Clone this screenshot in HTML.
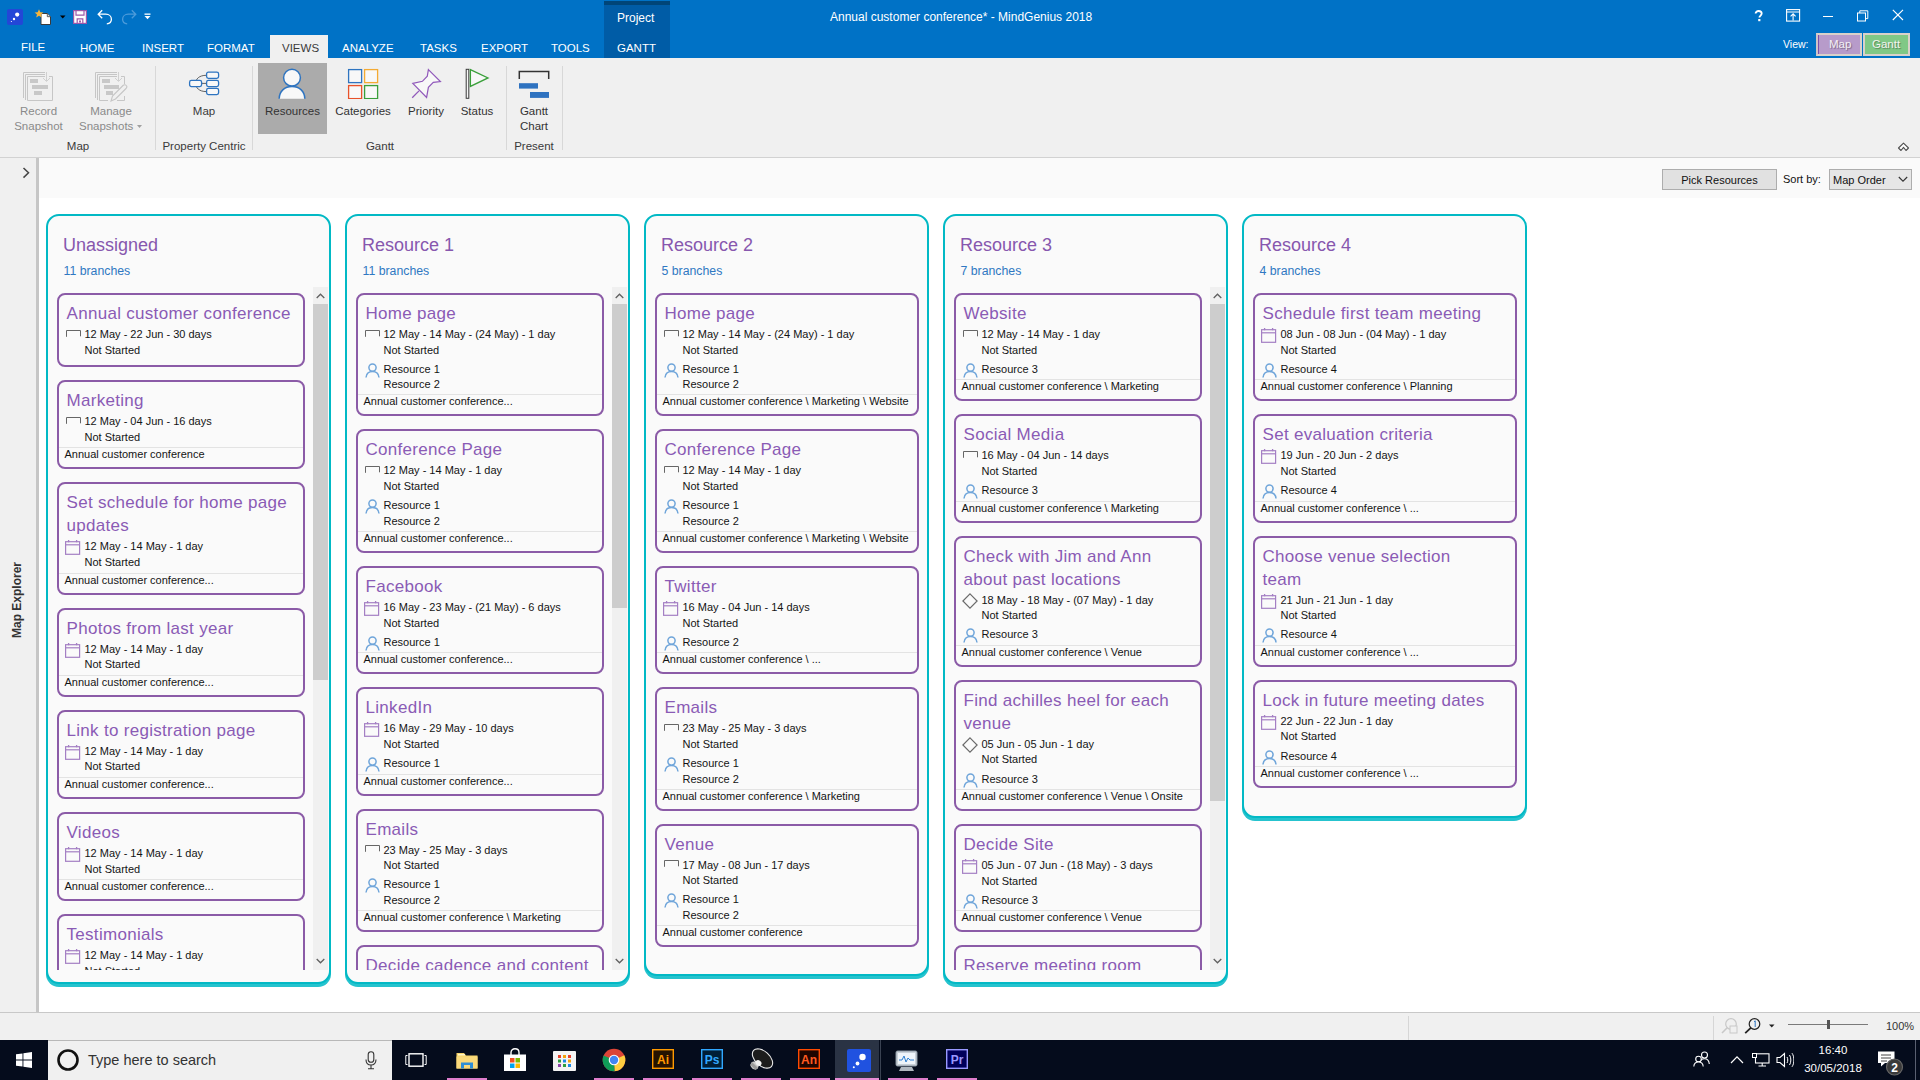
<!DOCTYPE html>
<html><head><meta charset="utf-8">
<style>
*{margin:0;padding:0;box-sizing:border-box}
html,body{width:1920px;height:1080px;overflow:hidden;background:#fff;font-family:"Liberation Sans",sans-serif;color:#000}
.a{position:absolute}
svg{display:block}
#top{position:absolute;left:0;top:0;width:1920px;height:58px;background:#0072C6}
.tab{position:absolute;top:41px;font-size:11.5px;color:#fff;line-height:14px;white-space:nowrap}
#ribbon{position:absolute;left:0;top:58px;width:1920px;height:100px;background:#F0F0F0;border-bottom:1px solid #D2D2D2}
.rb{position:absolute;font-size:11.5px;line-height:15px;color:#3A3A3A;text-align:center;white-space:nowrap}
.rsep{position:absolute;top:8px;width:1px;height:84px;background:#D8D8D8}
#side{position:absolute;left:0;top:158px;width:36px;height:854px;background:#F0F0F0}
#sideline{position:absolute;left:36px;top:158px;width:3px;height:854px;background:#C6C6C6}
#content{position:absolute;left:39px;top:158px;width:1881px;height:854px;background:#fff}
#toolbar{position:absolute;left:39px;top:158px;width:1881px;height:40px;background:#FAFAFA}
#status{position:absolute;left:0;top:1012px;width:1920px;height:28px;background:#F0F0F0;border-top:1px solid #C8C8C8}
#taskbar{position:absolute;left:0;top:1040px;width:1920px;height:40px;background:#050C1C}
.col{position:absolute;top:214px;width:285px;border:2px solid #02B9C5;border-radius:13px;background:#FAFAFA;box-shadow:0 3px 0 0 #26C3CE}
.colh{position:absolute;left:15px;top:18.5px;font-size:18px;line-height:20px;color:#8757AE;white-space:nowrap}
.colb{position:absolute;left:15.5px;top:47.5px;font-size:12.3px;line-height:14px;color:#2F78C2;white-space:nowrap}
.scroll{position:absolute;left:0;top:71px;width:281px;overflow:hidden}
.cards{position:absolute;left:8.5px;top:6px}
.card{position:relative;border:2px solid #8B5BA7;border-radius:8px;background:#FAFAFA;padding-top:6px;padding-bottom:6px;margin-bottom:13px}
.card.nf{padding-bottom:7px}
.ct{position:relative;top:1px;font-size:17px;letter-spacing:0.3px;line-height:23px;color:#8A5BB5;padding-left:8px;white-space:nowrap}
.row{position:relative;font-size:11px;line-height:15.6px;padding-left:26px;color:#141414;white-space:nowrap}
.row .ic{position:absolute}
.dt{margin-top:3px}
.res{margin-top:3.5px}
.r2{line-height:15.2px}
.foot{border-top:1px solid #E3E3E3;margin-top:2px;font-size:11px;line-height:13px;padding-left:6px;color:#141414;white-space:nowrap}
.sb{position:absolute;left:265px;width:15px;background:#F0F0F0}
.thumb{position:absolute;left:0;width:15px;background:#CDCDCD}
.tb{position:absolute;font-size:13px;color:#fff;white-space:nowrap}
</style></head><body>
<div id="top">
<svg class="a" style="left:7px;top:9px" width="16" height="16"><rect x="0" y="0" width="16" height="16" rx="2" fill="#2347D7"/><circle cx="10.2" cy="5.6" r="2.1" fill="#fff"/><circle cx="7" cy="10" r="1.2" fill="#fff"/><circle cx="4.4" cy="12.5" r="0.6" fill="#fff"/></svg>
<svg class="a" style="left:34px;top:9px" width="18" height="17"><path d="M7 4.5H13.3L16.5 7.7V15.5H7Z" fill="#fff" stroke="#3a3a3a" stroke-width="1"/><path d="M13.3 4.5V7.7H16.5" fill="#ddd" stroke="#3a3a3a" stroke-width="0.8"/><path d="M5 0.3L6.3 3.2L9.4 3.4L7 5.4L7.8 8.4L5 6.7L2.2 8.4L3 5.4L0.6 3.4L3.7 3.2Z" fill="#F5B43B"/></svg>
<svg class="a" style="left:60px;top:15px" width="6" height="4"><path d="M0 0.5H5.5L2.75 3.5Z" fill="#000"/></svg>
<svg class="a" style="left:73px;top:10px" width="14" height="14"><rect x="0.6" y="0.6" width="12.8" height="12.8" fill="#fff" stroke="#9D58A9" stroke-width="1.2"/><path d="M3 0.6V5.2H11V0.6" fill="none" stroke="#9D58A9" stroke-width="1.2"/><path d="M4.2 13.4V8.8H9.8V13.4" fill="none" stroke="#9D58A9" stroke-width="1.2"/><rect x="6" y="10.5" width="2" height="2" fill="#9D58A9"/></svg>
<svg class="a" style="left:97px;top:9px" width="16" height="16"><path d="M5.2 1.2L1.2 5.2L5.2 9.2M1.2 5.2H8.8C12 5.2 14.4 7.4 14.4 10.3C14.4 12.8 12.4 14.6 9.8 14.8" fill="none" stroke="#fff" stroke-width="1.3"/></svg>
<svg class="a" style="left:121px;top:9px" width="16" height="16"><path d="M10.8 1.2L14.8 5.2L10.8 9.2M14.8 5.2H7.2C4 5.2 1.6 7.4 1.6 10.3C1.6 12.8 3.6 14.6 6.2 14.8" fill="none" stroke="#4C9BDA" stroke-width="1.3"/></svg>
<svg class="a" style="left:144px;top:13px" width="7" height="7"><rect x="0.5" y="0.5" width="6" height="1.3" fill="#fff"/><path d="M0.5 3H6.5L3.5 6.3Z" fill="#fff"/></svg>
<div class="tb" style="left:830px;top:9.5px;font-size:12px;line-height:14px">Annual customer conference* - MindGenius 2018</div>
<div class="a" style="left:604px;top:1px;width:66px;height:57px;background:#005CA6"></div>
<div class="a" style="left:604px;top:1px;width:66px;height:4px;background:#004578"></div>
<div class="tb" style="left:617px;top:11px;font-size:12px;line-height:14px">Project</div>
<svg class="a" style="left:1754px;top:10px" width="10" height="12"><path d="M1.6 3.6C1.6 1.9 2.9 1 4.6 1C6.4 1 7.7 2 7.7 3.6C7.7 5.4 5.4 5.7 5.4 7.6" fill="none" stroke="#fff" stroke-width="1.8"/><rect x="4.2" y="9" width="2.2" height="2.2" fill="#fff"/></svg>
<svg class="a" style="left:1786px;top:9px" width="15" height="13"><rect x="0.6" y="0.6" width="13" height="11.5" fill="none" stroke="#fff" stroke-width="1.1"/><path d="M0.6 3H13.6" stroke="#fff" stroke-width="1"/><path d="M7.1 11.5V5M4.6 7.4L7.1 4.9L9.6 7.4" fill="none" stroke="#fff" stroke-width="1.1"/></svg>
<div class="a" style="left:1823px;top:16px;width:10px;height:1px;background:#fff"></div>
<svg class="a" style="left:1857px;top:10px" width="12" height="12"><rect x="0.5" y="3" width="8" height="8" fill="none" stroke="#fff" stroke-width="1"/><path d="M2.8 3V0.8H10.8V8.6H8.5" fill="none" stroke="#fff" stroke-width="1"/></svg>
<svg class="a" style="left:1892px;top:9px" width="12" height="12"><path d="M0.8 0.8L11 11M11 0.8L0.8 11" stroke="#fff" stroke-width="1.1"/></svg>
<div class="tab" style="left:21px;top:39.5px">FILE</div>
<div class="tab" style="left:80px">HOME</div>
<div class="tab" style="left:142px">INSERT</div>
<div class="tab" style="left:207px">FORMAT</div>
<div class="a" style="left:270px;top:35px;width:58px;height:23px;background:#F0F0F0"></div>
<div class="tab" style="left:282px;color:#3A3A3A">VIEWS</div>
<div class="tab" style="left:342px">ANALYZE</div>
<div class="tab" style="left:420px">TASKS</div>
<div class="tab" style="left:481px">EXPORT</div>
<div class="tab" style="left:551px">TOOLS</div>
<div class="tab" style="left:617px">GANTT</div>
<div class="tb" style="left:1783px;top:38px;font-size:10.5px;line-height:12px">View:</div>
<div class="a" style="left:1816px;top:33px;width:46px;height:23px;background:#B79BCA;border:2px solid #D9D1CA;border-left:2px solid #CFC3C8"></div>
<div class="a" style="left:1818px;top:35px;width:1px;height:19px;background:#7E4EA8"></div>
<div class="tb" style="left:1829px;top:38px;font-size:11.5px;line-height:13px;color:#F4F0F4;text-shadow:1px 1px 1px rgba(0,0,0,0.35)">Map</div>
<div class="a" style="left:1863px;top:33px;width:47px;height:23px;background:#80C886;border:2px solid #D9D1CA"></div>
<div class="tb" style="left:1872px;top:38px;font-size:11.5px;line-height:13px;color:#F4F4F0;text-shadow:1px 1px 1px rgba(0,0,0,0.35)">Gantt</div>
</div>
<div id="ribbon">
<svg class="a" style="left:23px;top:14px" width="32" height="29"><g fill="none" stroke="#C6C6C6" stroke-width="1"><path d="M0.5 26V0.5H22"/><path d="M2.5 28V2.5H22"/><path d="M4.5 28.5V4.5H22M26 4.5H29.5V28.5H4.5"/></g><g fill="#C8C8C8"><rect x="7" y="7" width="8" height="4"/><rect x="9" y="13" width="16" height="4"/><rect x="11" y="19" width="8" height="4"/></g><path d="M23.5 0V9M20 6L23.5 9.5L27 6" fill="none" stroke="#D0D0D0" stroke-width="1"/></svg>
<svg class="a" style="left:95px;top:14px" width="33" height="30"><g fill="none" stroke="#C6C6C6" stroke-width="1"><path d="M0.5 26V0.5H22"/><path d="M2.5 28V2.5H22"/><path d="M4.5 28.5V4.5H22M26 4.5H29.5V12M29.5 24V28.5H22M13 28.5H4.5"/></g><g fill="#C8C8C8"><rect x="7" y="7" width="8" height="4"/><rect x="9" y="13" width="15" height="4"/><rect x="11" y="19" width="7" height="4"/></g><path d="M23.5 0V9M20 6L23.5 9.5L27 6" fill="none" stroke="#D0D0D0" stroke-width="1"/><path d="M16 29L17.5 24L28 13.5C29 12.5 30.5 12.5 31.3 13.5C32 14.3 32 15.5 31 16.5L20.5 27Z" fill="#F0F0F0" stroke="#C6C6C6" stroke-width="1.1"/></svg>
<div class="rb" style="left:14px;top:46px;width:49px;color:#8A8A8A">Record<br>Snapshot</div>
<div class="rb" style="left:81px;top:46px;width:60px;color:#8A8A8A">Manage</div><div class="rb" style="left:79px;top:61px;width:54px;color:#8A8A8A">Snapshots</div>
<svg class="a" style="left:137px;top:67px" width="5" height="4"><path d="M0 0H5L2.5 3Z" fill="#A0A0A0"/></svg>
<div class="rb" style="left:40px;top:81px;width:76px;color:#3A3A3A">Map</div>
<div class="rsep" style="left:155px"></div>
<svg class="a" style="left:188px;top:13px" width="32" height="25"><path d="M18.5 4.3C11 4.3 7.7 8 7.7 12.4C7.7 16.8 11 20.6 18.5 20.6M13.7 12.4H18.5" fill="none" stroke="#505050" stroke-width="0.9"/><g fill="#F8F8F8" stroke="#2E74C0" stroke-width="1.3"><rect x="1.6" y="9.4" width="12" height="6.2" rx="1.8"/><rect x="18.6" y="1.2" width="12" height="6.2" rx="1.8"/><rect x="18.6" y="9.4" width="12" height="6.2" rx="1.8"/><rect x="18.6" y="17.4" width="12" height="6.2" rx="1.8"/></g></svg>
<div class="rb" style="left:174px;top:46px;width:60px;color:#3A3A3A">Map</div>
<div class="rb" style="left:150px;top:81px;width:108px;color:#3A3A3A">Property Centric</div>
<div class="rsep" style="left:252px"></div>
<div class="a" style="left:258px;top:5px;width:69px;height:71px;background:#ABABAB"></div>
<svg class="a" style="left:278px;top:10px" width="28" height="31"><circle cx="14" cy="9.7" r="8.4" fill="#F8F8F8" stroke="#2E74C0" stroke-width="1.5"/><path d="M1.2 30.8C1.2 23.2 6.5 18.6 14 18.6S26.8 23.2 26.8 30.8Z" fill="#F8F8F8"/><path d="M1.2 30.8C1.2 23.2 6.5 18.6 14 18.6S26.8 23.2 26.8 30.8" fill="none" stroke="#2E74C0" stroke-width="1.5"/></svg>
<div class="rb" style="left:258px;top:46px;width:69px;color:#333">Resources</div>
<svg class="a" style="left:347px;top:10px" width="32" height="31"><rect x="1.6" y="1.6" width="13" height="13" fill="#F8F8F8" stroke="#2E74C0" stroke-width="1.3"/><rect x="17.6" y="1.6" width="13" height="13" fill="#F8F8F8" stroke="#F4AA33" stroke-width="1.3"/><rect x="1.6" y="17.6" width="13" height="13" fill="#F8F8F8" stroke="#E8522A" stroke-width="1.3"/><rect x="17.6" y="17.6" width="13" height="13" fill="#F8F8F8" stroke="#3A9F3A" stroke-width="1.3"/></svg>
<div class="rb" style="left:333px;top:46px;width:60px;color:#333">Categories</div>
<svg class="a" style="left:411px;top:10px" width="31" height="31"><path d="M17.4 1.6L29.4 13.5L22.3 14.3L17.4 19.3L15.6 29.4L1.8 15.4L11.4 13.3L16.3 8.1Z" fill="#F8F8F8" stroke="#9058BA" stroke-width="1.2" stroke-linejoin="miter"/><path d="M8 22.9L1.2 29.7" stroke="#9058BA" stroke-width="1.3"/></svg>
<div class="rb" style="left:400px;top:46px;width:52px;color:#333">Priority</div>
<svg class="a" style="left:465px;top:10px" width="25" height="31"><rect x="1.2" y="1.3" width="2.6" height="29" fill="#F8F8F8" stroke="#3A3A3A" stroke-width="1"/><path d="M5.4 1.6L23 9.9L5.4 18.4Z" fill="#F8F8F8" stroke="#3A9F3A" stroke-width="1.3"/></svg>
<div class="rb" style="left:452px;top:46px;width:50px;color:#333">Status</div>
<div class="rb" style="left:300px;top:81px;width:160px;color:#3A3A3A">Gantt</div>
<div class="rsep" style="left:506px"></div>
<svg class="a" style="left:518px;top:12px" width="32" height="28"><path d="M1.3 9V1.4H30.7V9" fill="none" stroke="#333" stroke-width="1.5"/><rect x="1" y="13.2" width="19" height="5.4" fill="#2E72C0"/><rect x="12" y="22" width="19" height="5.9" fill="#2E72C0"/></svg>
<div class="rb" style="left:509px;top:46px;width:50px;color:#333">Gantt<br>Chart</div>
<div class="rb" style="left:509px;top:81px;width:50px;color:#3A3A3A">Present</div>
<div class="rsep" style="left:562px"></div>
<svg class="a" style="left:1897px;top:84px" width="13" height="10"><path d="M1.5 6L6.5 1.2L11.5 6L9 8.5L6.5 5.3L4 8.5Z" fill="#fff" stroke="#505050" stroke-width="1.1" stroke-linejoin="round"/></svg>
</div>
<div id="side">
<svg class="a" style="left:22px;top:9px" width="8" height="12"><path d="M1.5 1L6.5 5.8L1.5 10.6" fill="none" stroke="#444" stroke-width="1.5"/></svg>
<div class="a" style="left:-21px;top:435px;width:76px;height:14px;transform:rotate(-90deg);font-size:12px;line-height:14px;font-weight:bold;color:#333;white-space:nowrap;text-align:center">Map Explorer</div>
</div>
<div id="sideline"></div>
<div id="content"></div>
<div id="toolbar">
<div class="a" style="left:1623px;top:11px;width:115px;height:21px;background:#E1E1E1;border:1px solid #ADADAD;font-size:11px;line-height:21px;text-align:center;color:#111">Pick Resources</div>
<div class="a" style="left:1744px;top:14px;font-size:11px;line-height:14px;color:#111;white-space:nowrap">Sort by:</div>
<div class="a" style="left:1790px;top:11px;width:83px;height:21px;background:#E6E6E6;border:1px solid #ADADAD;font-size:11px;line-height:21px;color:#111;padding-left:3px;white-space:nowrap">Map Order</div>
<svg class="a" style="left:1859px;top:18px" width="10" height="7"><path d="M0.8 1L5 5.2L9.2 1" fill="none" stroke="#333" stroke-width="1.1"/></svg>
</div>
<div class="col" style="left:46px;height:770px"><div class="colh">Unassigned</div><div class="colb">11 branches</div><div class="scroll" style="height:683px"><div class="cards" style="width:248px"><div class="card nf"><div class="ct">Annual customer conference</div><div class="row dt"><svg class="ic" style="left:7px;top:2.7px" width="15" height="8"><path d="M0.5 6.8V0.5H14.5V6.3" fill="none" stroke="#666" stroke-width="1"/></svg>12 May - 22 Jun - 30 days</div><div class="row">Not Started</div></div><div class="card"><div class="ct">Marketing</div><div class="row dt"><svg class="ic" style="left:7px;top:2.7px" width="15" height="8"><path d="M0.5 6.8V0.5H14.5V6.3" fill="none" stroke="#666" stroke-width="1"/></svg>12 May - 04 Jun - 16 days</div><div class="row">Not Started</div><div class="foot">Annual customer conference</div></div><div class="card"><div class="ct">Set schedule for home page<br>updates</div><div class="row dt"><svg class="ic" style="left:6px;top:0px" width="16" height="17"><rect x="0.6" y="2.7" width="14" height="12.6" fill="none" stroke="#A47FC4" stroke-width="1.2"/><path d="M0.6 5.8H14.6" stroke="#A47FC4" stroke-width="1.2"/><path d="M3.6 0.9V3.2M11.6 0.9V3.2" stroke="#A47FC4" stroke-width="1.3"/></svg>12 May - 14 May - 1 day</div><div class="row">Not Started</div><div class="foot">Annual customer conference...</div></div><div class="card"><div class="ct">Photos from last year</div><div class="row dt"><svg class="ic" style="left:6px;top:0px" width="16" height="17"><rect x="0.6" y="2.7" width="14" height="12.6" fill="none" stroke="#A47FC4" stroke-width="1.2"/><path d="M0.6 5.8H14.6" stroke="#A47FC4" stroke-width="1.2"/><path d="M3.6 0.9V3.2M11.6 0.9V3.2" stroke="#A47FC4" stroke-width="1.3"/></svg>12 May - 14 May - 1 day</div><div class="row">Not Started</div><div class="foot">Annual customer conference...</div></div><div class="card"><div class="ct">Link to registration page</div><div class="row dt"><svg class="ic" style="left:6px;top:0px" width="16" height="17"><rect x="0.6" y="2.7" width="14" height="12.6" fill="none" stroke="#A47FC4" stroke-width="1.2"/><path d="M0.6 5.8H14.6" stroke="#A47FC4" stroke-width="1.2"/><path d="M3.6 0.9V3.2M11.6 0.9V3.2" stroke="#A47FC4" stroke-width="1.3"/></svg>12 May - 14 May - 1 day</div><div class="row">Not Started</div><div class="foot">Annual customer conference...</div></div><div class="card"><div class="ct">Videos</div><div class="row dt"><svg class="ic" style="left:6px;top:0px" width="16" height="17"><rect x="0.6" y="2.7" width="14" height="12.6" fill="none" stroke="#A47FC4" stroke-width="1.2"/><path d="M0.6 5.8H14.6" stroke="#A47FC4" stroke-width="1.2"/><path d="M3.6 0.9V3.2M11.6 0.9V3.2" stroke="#A47FC4" stroke-width="1.3"/></svg>12 May - 14 May - 1 day</div><div class="row">Not Started</div><div class="foot">Annual customer conference...</div></div><div class="card"><div class="ct">Testimonials</div><div class="row dt"><svg class="ic" style="left:6px;top:0px" width="16" height="17"><rect x="0.6" y="2.7" width="14" height="12.6" fill="none" stroke="#A47FC4" stroke-width="1.2"/><path d="M0.6 5.8H14.6" stroke="#A47FC4" stroke-width="1.2"/><path d="M3.6 0.9V3.2M11.6 0.9V3.2" stroke="#A47FC4" stroke-width="1.3"/></svg>12 May - 14 May - 1 day</div><div class="row">Not Started</div><div class="foot">Annual customer conference...</div></div></div></div><div class="sb" style="top:71px;height:683px"><svg style="position:absolute;left:3px;top:6px" width="9" height="6"><path d="M0.7 5L4.5 1.2L8.3 5" fill="none" stroke="#606060" stroke-width="1.3"/></svg><div class="thumb" style="top:17px;height:376px"></div><svg style="position:absolute;left:3px;top:671px" width="9" height="6"><path d="M0.7 1L4.5 4.8L8.3 1" fill="none" stroke="#606060" stroke-width="1.3"/></svg></div></div><div class="col" style="left:345px;height:770px"><div class="colh">Resource 1</div><div class="colb">11 branches</div><div class="scroll" style="height:683px"><div class="cards" style="width:248px"><div class="card"><div class="ct">Home page</div><div class="row dt"><svg class="ic" style="left:7px;top:2.7px" width="15" height="8"><path d="M0.5 6.8V0.5H14.5V6.3" fill="none" stroke="#666" stroke-width="1"/></svg>12 May - 14 May - (24 May) - 1 day</div><div class="row">Not Started</div><div class="row res"><svg class="ic" style="left:7px;top:1px" width="15" height="15"><circle cx="7.5" cy="4.6" r="3.6" fill="none" stroke="#6FA5DA" stroke-width="1.5"/><path d="M1 14.5C1.4 10.6 4 8.6 7.5 8.6S13.6 10.6 14 14.5" fill="none" stroke="#6FA5DA" stroke-width="1.5"/></svg>Resource 1</div><div class="row r2">Resource 2</div><div class="foot">Annual customer conference...</div></div><div class="card"><div class="ct">Conference Page</div><div class="row dt"><svg class="ic" style="left:7px;top:2.7px" width="15" height="8"><path d="M0.5 6.8V0.5H14.5V6.3" fill="none" stroke="#666" stroke-width="1"/></svg>12 May - 14 May - 1 day</div><div class="row">Not Started</div><div class="row res"><svg class="ic" style="left:7px;top:1px" width="15" height="15"><circle cx="7.5" cy="4.6" r="3.6" fill="none" stroke="#6FA5DA" stroke-width="1.5"/><path d="M1 14.5C1.4 10.6 4 8.6 7.5 8.6S13.6 10.6 14 14.5" fill="none" stroke="#6FA5DA" stroke-width="1.5"/></svg>Resource 1</div><div class="row r2">Resource 2</div><div class="foot">Annual customer conference...</div></div><div class="card"><div class="ct">Facebook</div><div class="row dt"><svg class="ic" style="left:6px;top:0px" width="16" height="17"><rect x="0.6" y="2.7" width="14" height="12.6" fill="none" stroke="#A47FC4" stroke-width="1.2"/><path d="M0.6 5.8H14.6" stroke="#A47FC4" stroke-width="1.2"/><path d="M3.6 0.9V3.2M11.6 0.9V3.2" stroke="#A47FC4" stroke-width="1.3"/></svg>16 May - 23 May - (21 May) - 6 days</div><div class="row">Not Started</div><div class="row res"><svg class="ic" style="left:7px;top:1px" width="15" height="15"><circle cx="7.5" cy="4.6" r="3.6" fill="none" stroke="#6FA5DA" stroke-width="1.5"/><path d="M1 14.5C1.4 10.6 4 8.6 7.5 8.6S13.6 10.6 14 14.5" fill="none" stroke="#6FA5DA" stroke-width="1.5"/></svg>Resource 1</div><div class="foot">Annual customer conference...</div></div><div class="card"><div class="ct">LinkedIn</div><div class="row dt"><svg class="ic" style="left:6px;top:0px" width="16" height="17"><rect x="0.6" y="2.7" width="14" height="12.6" fill="none" stroke="#A47FC4" stroke-width="1.2"/><path d="M0.6 5.8H14.6" stroke="#A47FC4" stroke-width="1.2"/><path d="M3.6 0.9V3.2M11.6 0.9V3.2" stroke="#A47FC4" stroke-width="1.3"/></svg>16 May - 29 May - 10 days</div><div class="row">Not Started</div><div class="row res"><svg class="ic" style="left:7px;top:1px" width="15" height="15"><circle cx="7.5" cy="4.6" r="3.6" fill="none" stroke="#6FA5DA" stroke-width="1.5"/><path d="M1 14.5C1.4 10.6 4 8.6 7.5 8.6S13.6 10.6 14 14.5" fill="none" stroke="#6FA5DA" stroke-width="1.5"/></svg>Resource 1</div><div class="foot">Annual customer conference...</div></div><div class="card"><div class="ct">Emails</div><div class="row dt"><svg class="ic" style="left:7px;top:2.7px" width="15" height="8"><path d="M0.5 6.8V0.5H14.5V6.3" fill="none" stroke="#666" stroke-width="1"/></svg>23 May - 25 May - 3 days</div><div class="row">Not Started</div><div class="row res"><svg class="ic" style="left:7px;top:1px" width="15" height="15"><circle cx="7.5" cy="4.6" r="3.6" fill="none" stroke="#6FA5DA" stroke-width="1.5"/><path d="M1 14.5C1.4 10.6 4 8.6 7.5 8.6S13.6 10.6 14 14.5" fill="none" stroke="#6FA5DA" stroke-width="1.5"/></svg>Resource 1</div><div class="row r2">Resource 2</div><div class="foot">Annual customer conference \ Marketing</div></div><div class="card"><div class="ct">Decide cadence and content</div><div class="row dt"><svg class="ic" style="left:6px;top:0px" width="16" height="17"><rect x="0.6" y="2.7" width="14" height="12.6" fill="none" stroke="#A47FC4" stroke-width="1.2"/><path d="M0.6 5.8H14.6" stroke="#A47FC4" stroke-width="1.2"/><path d="M3.6 0.9V3.2M11.6 0.9V3.2" stroke="#A47FC4" stroke-width="1.3"/></svg>23 May - 25 May - 3 days</div><div class="row">Not Started</div><div class="row res"><svg class="ic" style="left:7px;top:1px" width="15" height="15"><circle cx="7.5" cy="4.6" r="3.6" fill="none" stroke="#6FA5DA" stroke-width="1.5"/><path d="M1 14.5C1.4 10.6 4 8.6 7.5 8.6S13.6 10.6 14 14.5" fill="none" stroke="#6FA5DA" stroke-width="1.5"/></svg>Resource 1</div><div class="foot">Annual customer conference...</div></div></div></div><div class="sb" style="top:71px;height:683px"><svg style="position:absolute;left:3px;top:6px" width="9" height="6"><path d="M0.7 5L4.5 1.2L8.3 5" fill="none" stroke="#606060" stroke-width="1.3"/></svg><div class="thumb" style="top:17px;height:304px"></div><svg style="position:absolute;left:3px;top:671px" width="9" height="6"><path d="M0.7 1L4.5 4.8L8.3 1" fill="none" stroke="#606060" stroke-width="1.3"/></svg></div></div><div class="col" style="left:644px;height:762px"><div class="colh">Resource 2</div><div class="colb">5 branches</div><div class="scroll" style="bottom:0"><div class="cards" style="width:264px"><div class="card"><div class="ct">Home page</div><div class="row dt"><svg class="ic" style="left:7px;top:2.7px" width="15" height="8"><path d="M0.5 6.8V0.5H14.5V6.3" fill="none" stroke="#666" stroke-width="1"/></svg>12 May - 14 May - (24 May) - 1 day</div><div class="row">Not Started</div><div class="row res"><svg class="ic" style="left:7px;top:1px" width="15" height="15"><circle cx="7.5" cy="4.6" r="3.6" fill="none" stroke="#6FA5DA" stroke-width="1.5"/><path d="M1 14.5C1.4 10.6 4 8.6 7.5 8.6S13.6 10.6 14 14.5" fill="none" stroke="#6FA5DA" stroke-width="1.5"/></svg>Resource 1</div><div class="row r2">Resource 2</div><div class="foot">Annual customer conference \ Marketing \ Website</div></div><div class="card"><div class="ct">Conference Page</div><div class="row dt"><svg class="ic" style="left:7px;top:2.7px" width="15" height="8"><path d="M0.5 6.8V0.5H14.5V6.3" fill="none" stroke="#666" stroke-width="1"/></svg>12 May - 14 May - 1 day</div><div class="row">Not Started</div><div class="row res"><svg class="ic" style="left:7px;top:1px" width="15" height="15"><circle cx="7.5" cy="4.6" r="3.6" fill="none" stroke="#6FA5DA" stroke-width="1.5"/><path d="M1 14.5C1.4 10.6 4 8.6 7.5 8.6S13.6 10.6 14 14.5" fill="none" stroke="#6FA5DA" stroke-width="1.5"/></svg>Resource 1</div><div class="row r2">Resource 2</div><div class="foot">Annual customer conference \ Marketing \ Website</div></div><div class="card"><div class="ct">Twitter</div><div class="row dt"><svg class="ic" style="left:6px;top:0px" width="16" height="17"><rect x="0.6" y="2.7" width="14" height="12.6" fill="none" stroke="#A47FC4" stroke-width="1.2"/><path d="M0.6 5.8H14.6" stroke="#A47FC4" stroke-width="1.2"/><path d="M3.6 0.9V3.2M11.6 0.9V3.2" stroke="#A47FC4" stroke-width="1.3"/></svg>16 May - 04 Jun - 14 days</div><div class="row">Not Started</div><div class="row res"><svg class="ic" style="left:7px;top:1px" width="15" height="15"><circle cx="7.5" cy="4.6" r="3.6" fill="none" stroke="#6FA5DA" stroke-width="1.5"/><path d="M1 14.5C1.4 10.6 4 8.6 7.5 8.6S13.6 10.6 14 14.5" fill="none" stroke="#6FA5DA" stroke-width="1.5"/></svg>Resource 2</div><div class="foot">Annual customer conference \ ...</div></div><div class="card"><div class="ct">Emails</div><div class="row dt"><svg class="ic" style="left:7px;top:2.7px" width="15" height="8"><path d="M0.5 6.8V0.5H14.5V6.3" fill="none" stroke="#666" stroke-width="1"/></svg>23 May - 25 May - 3 days</div><div class="row">Not Started</div><div class="row res"><svg class="ic" style="left:7px;top:1px" width="15" height="15"><circle cx="7.5" cy="4.6" r="3.6" fill="none" stroke="#6FA5DA" stroke-width="1.5"/><path d="M1 14.5C1.4 10.6 4 8.6 7.5 8.6S13.6 10.6 14 14.5" fill="none" stroke="#6FA5DA" stroke-width="1.5"/></svg>Resource 1</div><div class="row r2">Resource 2</div><div class="foot">Annual customer conference \ Marketing</div></div><div class="card"><div class="ct">Venue</div><div class="row dt"><svg class="ic" style="left:7px;top:2.7px" width="15" height="8"><path d="M0.5 6.8V0.5H14.5V6.3" fill="none" stroke="#666" stroke-width="1"/></svg>17 May - 08 Jun - 17 days</div><div class="row">Not Started</div><div class="row res"><svg class="ic" style="left:7px;top:1px" width="15" height="15"><circle cx="7.5" cy="4.6" r="3.6" fill="none" stroke="#6FA5DA" stroke-width="1.5"/><path d="M1 14.5C1.4 10.6 4 8.6 7.5 8.6S13.6 10.6 14 14.5" fill="none" stroke="#6FA5DA" stroke-width="1.5"/></svg>Resource 1</div><div class="row r2">Resource 2</div><div class="foot">Annual customer conference</div></div></div></div></div><div class="col" style="left:943px;height:770px"><div class="colh">Resource 3</div><div class="colb">7 branches</div><div class="scroll" style="height:683px"><div class="cards" style="width:248px"><div class="card"><div class="ct">Website</div><div class="row dt"><svg class="ic" style="left:7px;top:2.7px" width="15" height="8"><path d="M0.5 6.8V0.5H14.5V6.3" fill="none" stroke="#666" stroke-width="1"/></svg>12 May - 14 May - 1 day</div><div class="row">Not Started</div><div class="row res"><svg class="ic" style="left:7px;top:1px" width="15" height="15"><circle cx="7.5" cy="4.6" r="3.6" fill="none" stroke="#6FA5DA" stroke-width="1.5"/><path d="M1 14.5C1.4 10.6 4 8.6 7.5 8.6S13.6 10.6 14 14.5" fill="none" stroke="#6FA5DA" stroke-width="1.5"/></svg>Resource 3</div><div class="foot">Annual customer conference \ Marketing</div></div><div class="card"><div class="ct">Social Media</div><div class="row dt"><svg class="ic" style="left:7px;top:2.7px" width="15" height="8"><path d="M0.5 6.8V0.5H14.5V6.3" fill="none" stroke="#666" stroke-width="1"/></svg>16 May - 04 Jun - 14 days</div><div class="row">Not Started</div><div class="row res"><svg class="ic" style="left:7px;top:1px" width="15" height="15"><circle cx="7.5" cy="4.6" r="3.6" fill="none" stroke="#6FA5DA" stroke-width="1.5"/><path d="M1 14.5C1.4 10.6 4 8.6 7.5 8.6S13.6 10.6 14 14.5" fill="none" stroke="#6FA5DA" stroke-width="1.5"/></svg>Resource 3</div><div class="foot">Annual customer conference \ Marketing</div></div><div class="card"><div class="ct">Check with Jim and Ann<br>about past locations</div><div class="row dt"><svg class="ic" style="left:6px;top:0px" width="16" height="16"><path d="M8 0.9L15.1 8L8 15.1L0.9 8Z" fill="none" stroke="#6a6a6a" stroke-width="1.2"/></svg>18 May - 18 May - (07 May) - 1 day</div><div class="row">Not Started</div><div class="row res"><svg class="ic" style="left:7px;top:1px" width="15" height="15"><circle cx="7.5" cy="4.6" r="3.6" fill="none" stroke="#6FA5DA" stroke-width="1.5"/><path d="M1 14.5C1.4 10.6 4 8.6 7.5 8.6S13.6 10.6 14 14.5" fill="none" stroke="#6FA5DA" stroke-width="1.5"/></svg>Resource 3</div><div class="foot">Annual customer conference \ Venue</div></div><div class="card"><div class="ct">Find achilles heel for each<br>venue</div><div class="row dt"><svg class="ic" style="left:6px;top:0px" width="16" height="16"><path d="M8 0.9L15.1 8L8 15.1L0.9 8Z" fill="none" stroke="#6a6a6a" stroke-width="1.2"/></svg>05 Jun - 05 Jun - 1 day</div><div class="row">Not Started</div><div class="row res"><svg class="ic" style="left:7px;top:1px" width="15" height="15"><circle cx="7.5" cy="4.6" r="3.6" fill="none" stroke="#6FA5DA" stroke-width="1.5"/><path d="M1 14.5C1.4 10.6 4 8.6 7.5 8.6S13.6 10.6 14 14.5" fill="none" stroke="#6FA5DA" stroke-width="1.5"/></svg>Resource 3</div><div class="foot">Annual customer conference \ Venue \ Onsite</div></div><div class="card"><div class="ct">Decide Site</div><div class="row dt"><svg class="ic" style="left:6px;top:0px" width="16" height="17"><rect x="0.6" y="2.7" width="14" height="12.6" fill="none" stroke="#A47FC4" stroke-width="1.2"/><path d="M0.6 5.8H14.6" stroke="#A47FC4" stroke-width="1.2"/><path d="M3.6 0.9V3.2M11.6 0.9V3.2" stroke="#A47FC4" stroke-width="1.3"/></svg>05 Jun - 07 Jun - (18 May) - 3 days</div><div class="row">Not Started</div><div class="row res"><svg class="ic" style="left:7px;top:1px" width="15" height="15"><circle cx="7.5" cy="4.6" r="3.6" fill="none" stroke="#6FA5DA" stroke-width="1.5"/><path d="M1 14.5C1.4 10.6 4 8.6 7.5 8.6S13.6 10.6 14 14.5" fill="none" stroke="#6FA5DA" stroke-width="1.5"/></svg>Resource 3</div><div class="foot">Annual customer conference \ Venue</div></div><div class="card"><div class="ct">Reserve meeting room</div><div class="row dt"><svg class="ic" style="left:6px;top:0px" width="16" height="17"><rect x="0.6" y="2.7" width="14" height="12.6" fill="none" stroke="#A47FC4" stroke-width="1.2"/><path d="M0.6 5.8H14.6" stroke="#A47FC4" stroke-width="1.2"/><path d="M3.6 0.9V3.2M11.6 0.9V3.2" stroke="#A47FC4" stroke-width="1.3"/></svg>05 Jun - 07 Jun - 3 days</div><div class="row">Not Started</div><div class="row res"><svg class="ic" style="left:7px;top:1px" width="15" height="15"><circle cx="7.5" cy="4.6" r="3.6" fill="none" stroke="#6FA5DA" stroke-width="1.5"/><path d="M1 14.5C1.4 10.6 4 8.6 7.5 8.6S13.6 10.6 14 14.5" fill="none" stroke="#6FA5DA" stroke-width="1.5"/></svg>Resource 3</div><div class="foot">Annual customer conference \ Venue</div></div></div></div><div class="sb" style="top:71px;height:683px"><svg style="position:absolute;left:3px;top:6px" width="9" height="6"><path d="M0.7 5L4.5 1.2L8.3 5" fill="none" stroke="#606060" stroke-width="1.3"/></svg><div class="thumb" style="top:17px;height:497px"></div><svg style="position:absolute;left:3px;top:671px" width="9" height="6"><path d="M0.7 1L4.5 4.8L8.3 1" fill="none" stroke="#606060" stroke-width="1.3"/></svg></div></div><div class="col" style="left:1242px;height:604px"><div class="colh">Resource 4</div><div class="colb">4 branches</div><div class="scroll" style="bottom:0"><div class="cards" style="width:264px"><div class="card"><div class="ct">Schedule first team meeting</div><div class="row dt"><svg class="ic" style="left:6px;top:0px" width="16" height="17"><rect x="0.6" y="2.7" width="14" height="12.6" fill="none" stroke="#A47FC4" stroke-width="1.2"/><path d="M0.6 5.8H14.6" stroke="#A47FC4" stroke-width="1.2"/><path d="M3.6 0.9V3.2M11.6 0.9V3.2" stroke="#A47FC4" stroke-width="1.3"/></svg>08 Jun - 08 Jun - (04 May) - 1 day</div><div class="row">Not Started</div><div class="row res"><svg class="ic" style="left:7px;top:1px" width="15" height="15"><circle cx="7.5" cy="4.6" r="3.6" fill="none" stroke="#6FA5DA" stroke-width="1.5"/><path d="M1 14.5C1.4 10.6 4 8.6 7.5 8.6S13.6 10.6 14 14.5" fill="none" stroke="#6FA5DA" stroke-width="1.5"/></svg>Resource 4</div><div class="foot">Annual customer conference \ Planning</div></div><div class="card"><div class="ct">Set evaluation criteria</div><div class="row dt"><svg class="ic" style="left:6px;top:0px" width="16" height="17"><rect x="0.6" y="2.7" width="14" height="12.6" fill="none" stroke="#A47FC4" stroke-width="1.2"/><path d="M0.6 5.8H14.6" stroke="#A47FC4" stroke-width="1.2"/><path d="M3.6 0.9V3.2M11.6 0.9V3.2" stroke="#A47FC4" stroke-width="1.3"/></svg>19 Jun - 20 Jun - 2 days</div><div class="row">Not Started</div><div class="row res"><svg class="ic" style="left:7px;top:1px" width="15" height="15"><circle cx="7.5" cy="4.6" r="3.6" fill="none" stroke="#6FA5DA" stroke-width="1.5"/><path d="M1 14.5C1.4 10.6 4 8.6 7.5 8.6S13.6 10.6 14 14.5" fill="none" stroke="#6FA5DA" stroke-width="1.5"/></svg>Resource 4</div><div class="foot">Annual customer conference \ ...</div></div><div class="card"><div class="ct">Choose venue selection<br>team</div><div class="row dt"><svg class="ic" style="left:6px;top:0px" width="16" height="17"><rect x="0.6" y="2.7" width="14" height="12.6" fill="none" stroke="#A47FC4" stroke-width="1.2"/><path d="M0.6 5.8H14.6" stroke="#A47FC4" stroke-width="1.2"/><path d="M3.6 0.9V3.2M11.6 0.9V3.2" stroke="#A47FC4" stroke-width="1.3"/></svg>21 Jun - 21 Jun - 1 day</div><div class="row">Not Started</div><div class="row res"><svg class="ic" style="left:7px;top:1px" width="15" height="15"><circle cx="7.5" cy="4.6" r="3.6" fill="none" stroke="#6FA5DA" stroke-width="1.5"/><path d="M1 14.5C1.4 10.6 4 8.6 7.5 8.6S13.6 10.6 14 14.5" fill="none" stroke="#6FA5DA" stroke-width="1.5"/></svg>Resource 4</div><div class="foot">Annual customer conference \ ...</div></div><div class="card"><div class="ct">Lock in future meeting dates</div><div class="row dt"><svg class="ic" style="left:6px;top:0px" width="16" height="17"><rect x="0.6" y="2.7" width="14" height="12.6" fill="none" stroke="#A47FC4" stroke-width="1.2"/><path d="M0.6 5.8H14.6" stroke="#A47FC4" stroke-width="1.2"/><path d="M3.6 0.9V3.2M11.6 0.9V3.2" stroke="#A47FC4" stroke-width="1.3"/></svg>22 Jun - 22 Jun - 1 day</div><div class="row">Not Started</div><div class="row res"><svg class="ic" style="left:7px;top:1px" width="15" height="15"><circle cx="7.5" cy="4.6" r="3.6" fill="none" stroke="#6FA5DA" stroke-width="1.5"/><path d="M1 14.5C1.4 10.6 4 8.6 7.5 8.6S13.6 10.6 14 14.5" fill="none" stroke="#6FA5DA" stroke-width="1.5"/></svg>Resource 4</div><div class="foot">Annual customer conference \ ...</div></div></div></div></div>
<div id="status">
<div class="a" style="left:1408px;top:3px;width:1px;height:24px;background:#D6D6D6"></div>
<div class="a" style="left:1713px;top:3px;width:1px;height:24px;background:#D6D6D6"></div>
<svg class="a" style="left:1721px;top:5px" width="17" height="16"><circle cx="10" cy="6" r="5.3" fill="none" stroke="#C8C8C8" stroke-width="1.2"/><path d="M6.2 9.8L1 15" stroke="#C8C8C8" stroke-width="1.6"/><rect x="9" y="8" width="7" height="7" fill="#F0F0F0" stroke="#C8C8C8"/></svg>
<svg class="a" style="left:1744px;top:5px" width="18" height="16"><circle cx="10.5" cy="6" r="5.3" fill="none" stroke="#222" stroke-width="1.2"/><path d="M6.8 9.8L1.2 15.2" stroke="#222" stroke-width="1.8"/><path d="M10 3.8L11.2 2.8V9" fill="none" stroke="#2E74C0" stroke-width="1"/></svg>
<svg class="a" style="left:1769px;top:11px" width="6" height="4"><path d="M0 0.5H5.5L2.75 3.5Z" fill="#222"/></svg>
<div class="a" style="left:1788px;top:11px;width:80px;height:1px;background:#7A7A7A"></div>
<div class="a" style="left:1827px;top:7px;width:3px;height:9px;background:#555"></div>
<div class="a" style="left:1886px;top:6px;font-size:11px;line-height:14px;color:#333">100%</div>
</div>
<div id="taskbar">
<svg class="a" style="left:16px;top:12px" width="16" height="16"><path d="M0 2.3L6.5 1.4V7.5H0ZM7.4 1.3L16 0V7.5H7.4ZM0 8.4H6.5V14.6L0 13.7ZM7.4 8.4H16V16L7.4 14.7Z" fill="#fff"/></svg>
<div class="a" style="left:48px;top:0;width:344px;height:40px;background:#F0F0F0;border-top:1px solid #B8B8B8"></div>
<svg class="a" style="left:56px;top:8px" width="24" height="24"><circle cx="12" cy="12" r="9.5" fill="none" stroke="#111" stroke-width="2.6"/></svg>
<div class="a" style="left:88px;top:11px;font-size:14.5px;line-height:18px;color:#333;white-space:nowrap">Type here to search</div>
<svg class="a" style="left:365px;top:11px" width="12" height="19"><rect x="3.2" y="0.8" width="5.6" height="10.5" rx="2.8" fill="none" stroke="#333" stroke-width="1.1"/><path d="M1 8.5C1 12 3 14 6 14S11 12 11 8.5M6 14V17.5M3 17.8H9" fill="none" stroke="#333" stroke-width="1.1"/></svg>
<svg class="a" style="left:405px;top:13px" width="22" height="14"><rect x="4" y="0.8" width="14" height="12.4" fill="none" stroke="#fff" stroke-width="1.4"/><path d="M2.5 2.5H0.8V11.5H2.5M19.5 2.5H21.2V11.5H19.5" fill="none" stroke="#fff" stroke-width="1"/></svg>
<svg class="a" style="left:456px;top:11px" width="22" height="18"><path d="M0.5 2V17.5H21.5V4.5H10L8 2Z" fill="#F7D46A"/><rect x="0.5" y="5.5" width="21" height="12" fill="#FAD97A"/><path d="M5 11.5H17V17.5H14V14H8V17.5H5Z" fill="#2E8ED6"/><rect x="2" y="3" width="7" height="1.5" fill="#FFF3C4"/></svg>
<svg class="a" style="left:503px;top:8px" width="24" height="24"><path d="M8 7V4.5C8 2.3 9.8 0.8 12 0.8S16 2.3 16 4.5V7" fill="none" stroke="#fff" stroke-width="1.4"/><rect x="1" y="6.5" width="22" height="16.5" fill="#fff"/><rect x="7" y="10" width="4.5" height="4.5" fill="#F25022"/><rect x="12.5" y="10" width="4.5" height="4.5" fill="#7FBA00"/><rect x="7" y="15.5" width="4.5" height="4.5" fill="#00A4EF"/><rect x="12.5" y="15.5" width="4.5" height="4.5" fill="#FFB900"/></svg>
<svg class="a" style="left:553px;top:11px" width="23" height="20"><rect x="0" y="0" width="23" height="20" rx="1" fill="#F4F4F4"/><g><rect x="5" y="4" width="3" height="3" fill="#E8412C"/><rect x="10" y="4" width="3" height="3" fill="#F4A20B"/><rect x="15" y="4" width="3" height="3" fill="#E8412C"/><rect x="5" y="8.5" width="3" height="3" fill="#2E9E3E"/><rect x="10" y="8.5" width="3" height="3" fill="#1E88E5"/><rect x="15" y="8.5" width="3" height="3" fill="#F4A20B"/><rect x="5" y="13" width="3" height="3" fill="#8E44AD"/><rect x="10" y="13" width="3" height="3" fill="#2E9E3E"/><rect x="15" y="13" width="3" height="3" fill="#1E88E5"/></g></svg>
<svg class="a" style="left:602px;top:8px" width="24" height="24"><circle cx="12" cy="12" r="11.3" fill="#DB4437"/><path d="M12 12L22.3 7.3A11.3 11.3 0 0 1 12.6 23.3Z" fill="#FFCD40"/><path d="M12 12L12.6 23.3A11.3 11.3 0 0 1 1.6 7.5Z" fill="#0F9D58"/><circle cx="12" cy="12" r="5.3" fill="#fff"/><circle cx="12" cy="12" r="4.2" fill="#4285F4"/></svg>
<svg class="a" style="left:652px;top:9px" width="22" height="20"><rect x="0.7" y="0.7" width="20.6" height="18.6" fill="#261300" stroke="#FF9A00" stroke-width="1.4"/><text x="11" y="14.5" font-family="Liberation Sans" font-size="12" font-weight="bold" fill="#FF9A00" text-anchor="middle">Ai</text></svg>
<svg class="a" style="left:701px;top:9px" width="22" height="20"><rect x="0.7" y="0.7" width="20.6" height="18.6" fill="#001E36" stroke="#31A8FF" stroke-width="1.4"/><text x="11" y="14.5" font-family="Liberation Sans" font-size="12" font-weight="bold" fill="#31A8FF" text-anchor="middle">Ps</text></svg>
<svg class="a" style="left:748px;top:6px" width="26" height="26"><ellipse cx="6.5" cy="19.5" rx="4.2" ry="3.6" transform="rotate(40 6.5 19.5)" fill="#C8C8C8"/><path d="M4 16L10 22L7.5 24L2.5 19Z" fill="#9A9A9A"/><ellipse cx="14.5" cy="12.5" rx="12" ry="7.2" transform="rotate(42 14.5 12.5)" fill="#1C1C1C" stroke="#E8E8E8" stroke-width="1.1"/><ellipse cx="10.5" cy="17" rx="3.2" ry="2.6" transform="rotate(42 10.5 17)" fill="#F0F0F0"/></svg>
<svg class="a" style="left:798px;top:9px" width="22" height="20"><rect x="0.7" y="0.7" width="20.6" height="18.6" fill="#1F0500" stroke="#FF4A00" stroke-width="1.4" /><text x="11" y="14.5" font-family="Liberation Sans" font-size="12" font-weight="bold" fill="#FF5A20" text-anchor="middle">An</text></svg>
<div class="a" style="left:835px;top:0;width:44px;height:40px;background:#2A3344"></div>
<svg class="a" style="left:847px;top:9px" width="24" height="23"><rect x="0" y="0" width="24" height="23" rx="2" fill="#2052E0"/><circle cx="15.5" cy="8" r="3.2" fill="#fff"/><circle cx="10.5" cy="14.5" r="1.9" fill="#fff"/><circle cx="6.8" cy="18.2" r="1" fill="#fff"/></svg>
<div class="a" style="left:880px;top:0;width:1px;height:40px;background:#3A4252"></div>
<svg class="a" style="left:895px;top:8px" width="25" height="24"><rect x="1" y="3" width="21" height="15" rx="1.5" fill="#C8D0D8" stroke="#8A96A2"/><rect x="3" y="5" width="17" height="11" fill="#EEF4FA"/><path d="M4 12L7 12L9 8L11 14L13 10L15 12L19 12" fill="none" stroke="#2F7FD0" stroke-width="1"/><path d="M6 19H17L19 23H4Z" fill="#B0B8C0"/></svg>
<svg class="a" style="left:946px;top:9px" width="22" height="20"><rect x="0.7" y="0.7" width="20.6" height="18.6" fill="#00005B" stroke="#9999FF" stroke-width="1.4"/><text x="11" y="14.5" font-family="Liberation Sans" font-size="12" font-weight="bold" fill="#9999FF" text-anchor="middle">Pr</text></svg>
<div class="a" style="left:447px;top:38px;width:40px;height:2px;background:#DE7DCB"></div>
<div class="a" style="left:594px;top:38px;width:40px;height:2px;background:#DE7DCB"></div>
<div class="a" style="left:643px;top:38px;width:40px;height:2px;background:#DE7DCB"></div>
<div class="a" style="left:692px;top:38px;width:40px;height:2px;background:#DE7DCB"></div>
<div class="a" style="left:741px;top:38px;width:40px;height:2px;background:#DE7DCB"></div>
<div class="a" style="left:790px;top:38px;width:40px;height:2px;background:#DE7DCB"></div>
<div class="a" style="left:835px;top:38px;width:44px;height:2px;background:#E68DD5"></div>
<div class="a" style="left:888px;top:38px;width:40px;height:2px;background:#DE7DCB"></div>
<div class="a" style="left:937px;top:38px;width:40px;height:2px;background:#DE7DCB"></div>
<svg class="a" style="left:1693px;top:11px" width="17" height="16"><circle cx="11.5" cy="4" r="3" fill="none" stroke="#fff" stroke-width="1.1"/><path d="M6.5 13C6.8 9.5 8.8 7.8 11.5 7.8S16 9.5 16.3 13" fill="none" stroke="#fff" stroke-width="1.1"/><circle cx="5.5" cy="8" r="2.8" fill="#050C1C" stroke="#fff" stroke-width="1.1"/><path d="M0.8 15.5C1 12.5 2.8 11 5.5 11S10 12.5 10.2 15.5" fill="#050C1C" stroke="#fff" stroke-width="1.1"/></svg>
<svg class="a" style="left:1730px;top:15px" width="14" height="9"><path d="M1 8L7 1.8L13 8" fill="none" stroke="#fff" stroke-width="1.2"/></svg>
<svg class="a" style="left:1752px;top:13px" width="18" height="14"><rect x="3.5" y="0.8" width="13.5" height="9.2" fill="none" stroke="#fff" stroke-width="1.1"/><path d="M10.2 10V12.5M6.5 13H14" stroke="#fff" stroke-width="1.1"/><rect x="0.5" y="0.5" width="4" height="4" fill="#050C1C" stroke="#fff" stroke-width="1"/></svg>
<svg class="a" style="left:1776px;top:12px" width="18" height="16"><path d="M1 5.5H4L8.5 1.5V14.5L4 10.5H1Z" fill="none" stroke="#fff" stroke-width="1.1"/><path d="M11 5C12 6.5 12 9.5 11 11M13.5 3C15.3 5.5 15.3 10.5 13.5 13M16 1.2C18.5 4.5 18.5 11.5 16 14.8" fill="none" stroke="#fff" stroke-width="1"/></svg>
<div class="a" style="left:1804px;top:3px;width:58px;text-align:center;font-size:11.5px;line-height:14px;color:#fff">16:40</div>
<div class="a" style="left:1798px;top:21px;width:70px;text-align:center;font-size:11.5px;line-height:14px;color:#fff">30/05/2018</div>
<svg class="a" style="left:1877px;top:10px" width="28" height="28"><path d="M1 1.5H17.5V13H8L4 16.5V13H1Z" fill="#fff"/><path d="M4 5H14M4 8H14M4 11H10" stroke="#444" stroke-width="1"/><circle cx="17.5" cy="17" r="8" fill="#3A3A3A" stroke="#666" stroke-width="1.2"/><text x="17.5" y="21.5" font-family="Liberation Sans" font-size="12" font-weight="bold" fill="#fff" text-anchor="middle">2</text></svg>
<div class="a" style="left:1915px;top:0;width:1px;height:40px;background:#5A6070"></div>
</div>
</body></html>
